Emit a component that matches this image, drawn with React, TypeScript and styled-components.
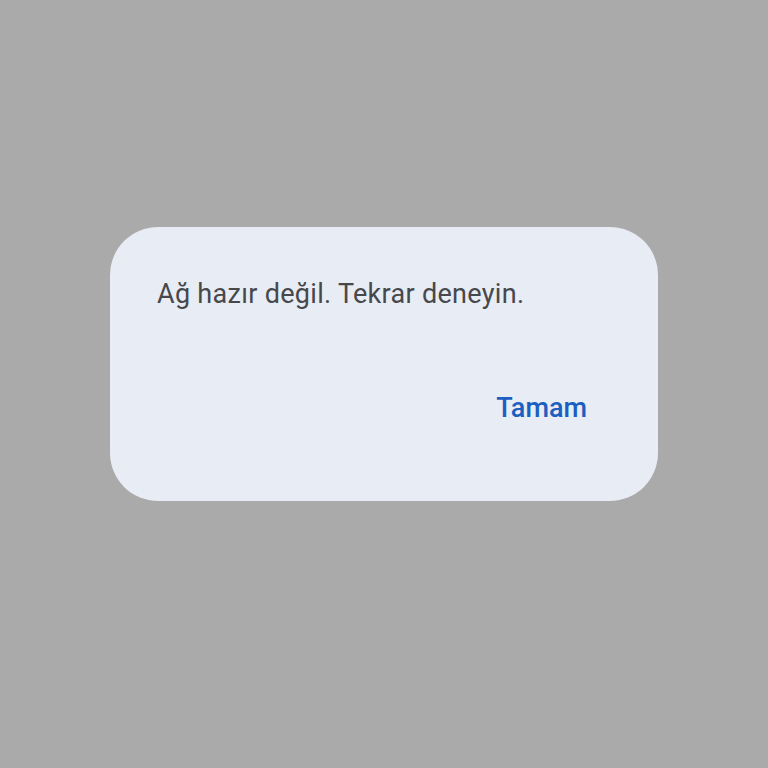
import styled, { createGlobalStyle } from 'styled-components';

const GlobalStyle = createGlobalStyle`
    html, body {
        margin: 0;
        padding: 0;
        background: #aaaaaa;
    }
    body {
        font-family: Roboto, 'Noto Sans', sans-serif;
    }
`;

export default function App() {
    return (
        <>
            <GlobalStyle />
            <Page>
                <Dialog>
                    <Message>Ağ hazır değil. Tekrar deneyin.</Message>
                    <Actions>
                        <ActionButton>Tamam</ActionButton>
                    </Actions>
                </Dialog>
            </Page>
        </>
    );
}

const Page = styled.div`
    width: 768px;
    height: 768px;
    display: flex;
    align-items: flex-start;
    justify-content: flex-start;
    padding: 227px 0 0 110px;
    box-sizing: border-box;
`;

const Dialog = styled.div`
    width: 548px;
    height: 274px;
    box-sizing: border-box;
    background: #e8ecf4;
    border-radius: 48px;
    padding: 51px 47px 0 47px;
    display: flex;
    flex-direction: column;
`;

const Message = styled.p`
    margin: 0;
    font-size: 27px;
    line-height: 32px;
    letter-spacing: 0.3px;
    color: #46484c;
`;

const Actions = styled.div`
    display: flex;
    justify-content: flex-end;
    margin-top: 82px;
    padding-right: 24px;
`;

const ActionButton = styled.span`
    font-size: 27px;
    font-weight: 500;
    line-height: 32px;
    color: #1b5fc1;
`;
